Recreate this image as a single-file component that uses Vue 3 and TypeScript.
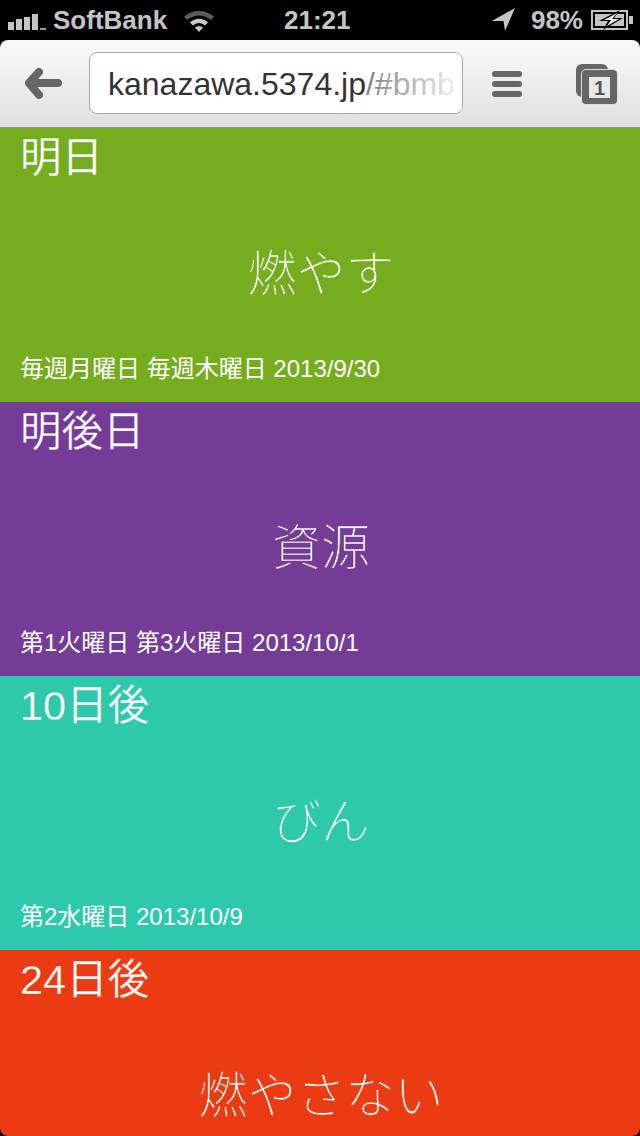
<script setup lang="ts">
type Card = { when: string; name: string; rule?: string; color: string };

const cards: Card[] = [
  { when: "明日", name: "燃やす", rule: "毎週月曜日 毎週木曜日 2013/9/30", color: "#76ad1f" },
  { when: "明後日", name: "資源", rule: "第1火曜日 第3火曜日 2013/10/1", color: "#743c96" },
  { when: "10日後", name: "びん", rule: "第2水曜日 2013/10/9", color: "#2dc9aa" },
  { when: "24日後", name: "燃やさない", color: "#eb3b12" },
];
</script>

<template>
  <div class="phone">
    <div class="status">
      <div class="status-left">
        <span class="bars"><i v-for="h in [8, 11, 13, 16]" :key="h" :style="{ height: h + 'px' }"></i><i class="dot"></i></span>
        <span>SoftBank</span>
        <svg class="wifi" width="32" height="24" viewBox="0 0 32 24">
          <path d="M1 8.500C9.500 1 22.500 1 31 8.500L28 12C21 6 11 6 4 12Z" fill="#5c5c5c" />
          <path d="M7 14.500C12.500 9.500 19.500 9.500 25 14.500L22 17.500C18.500 14 13.500 14 10 17.500Z" fill="#c8c8c8" />
          <path d="M12 19.500C14.500 17.500 17.500 17.500 20 19.500L16 24Z" fill="#c8c8c8" />
        </svg>
      </div>
      <span class="clock">21:21</span>
      <div class="status-right">
        <svg class="locate" width="24" height="24" viewBox="0 0 24 24"><path d="M0 13L23 0L13 23L11.500 13Z" fill="#c4c4c4" /></svg>
        <span>98%</span>
        <svg class="battery" width="43" height="20" viewBox="0 0 43 20">
          <rect x="1" y="1" width="35" height="18" fill="none" stroke="#c4c4c4" stroke-width="2" />
          <rect x="4" y="4" width="29" height="12" fill="#c4c4c4" />
          <rect x="38" y="6" width="4" height="8" fill="#c4c4c4" />
          <path d="M29 0L8 11H17L12 20L32 8H23Z" fill="#000" />
          <path d="M26 3L13 10H20L16 16L28 9H21Z" fill="#eee" />
        </svg>
      </div>
    </div>

    <div class="browser">
      <div class="toolbar">
        <svg class="back" width="38" height="34" viewBox="0 0 38 34">
          <path d="M15 5L5 16L15 28M5 16H34" fill="none" stroke="#666" stroke-width="8" stroke-linecap="round" stroke-linejoin="round" />
        </svg>
        <div class="url"><span class="host">kanazawa.5374.jp</span><span class="hash">/#bmb</span><span class="fade"></span></div>
        <div class="menu"><i></i><i></i><i></i></div>
        <svg class="tabs" width="43" height="42" viewBox="0 0 43 42">
          <rect x="1" y="1" width="32" height="33" rx="6" fill="#666" />
          <rect x="6" y="6" width="37" height="36" rx="5" fill="#ddd" />
          <rect x="7" y="7" width="35" height="34" rx="4" fill="#666" />
          <rect x="14" y="14" width="21" height="21" fill="#e9e9e9" />
          <text x="24.500" y="32" text-anchor="middle" class="tab-count">1</text>
        </svg>
      </div>

      <section v-for="c in cards" :key="c.when" class="card" :style="{ background: c.color, '--c': c.color }">
        <h2>{{ c.when }}</h2>
        <p class="name">{{ c.name }}</p>
        <p v-if="c.rule" class="rule">{{ c.rule }}</p>
      </section>
    </div>
  </div>
</template>

<style scoped>
.phone {
  width: 640px;
  height: 1136px;
  overflow: hidden;
  background: #000;
  font-family: "Liberation Sans", "Noto Sans CJK JP", sans-serif;
}
.status {
  height: 40px;
  position: relative;
  display: flex;
  align-items: center;
  justify-content: space-between;
  padding: 0 6px 0 8px;
  color: #c4c4c4;
  font-size: 26px;
  font-weight: 700;
}
.status-left {
  display: flex;
  align-items: center;
  gap: 7px;
}
.bars {
  display: flex;
  align-items: flex-end;
  gap: 2px;
  height: 16px;
  margin-top: 4px;
}
.bars i {
  width: 6px;
  background: #c4c4c4;
}
.bars i.dot {
  height: 2px;
  background: #999;
}
.wifi {
  margin-left: 9px;
}
.clock {
  position: absolute;
  left: 284px;
  top: 4px;
  line-height: 32px;
}
.status-right {
  display: flex;
  align-items: center;
}
.locate {
  margin-right: 15px;
}
.battery {
  margin-left: 8px;
}
.browser {
  height: 1096px;
  overflow: hidden;
  border-radius: 8px;
}
.toolbar {
  height: 88px;
  box-sizing: border-box;
  display: flex;
  align-items: center;
  padding: 0 0 0 24px;
  background: linear-gradient(#fbfbfb, #dfdfdf);
  border-bottom: 1px solid #8f8f8f;
}
.back {
  flex: none;
}
.url {
  position: relative;
  box-sizing: border-box;
  width: 374px;
  height: 62px;
  margin: 0 0 2px 27px;
  padding-left: 18px;
  border: 1px solid #aaa;
  border-radius: 8px;
  background: #fff;
  font-size: 32px;
  line-height: 62px;
  white-space: nowrap;
  overflow: hidden;
}
.host {
  color: #333;
}
.hash {
  color: #888;
}
.fade {
  position: absolute;
  top: 0;
  right: 0;
  bottom: 0;
  width: 90px;
  background: linear-gradient(to right, rgba(255, 255, 255, 0), rgba(255, 255, 255, 0.94));
}
.menu {
  width: 30px;
  margin-left: 29px;
  display: flex;
  flex-direction: column;
  gap: 4px;
}
.menu i {
  height: 6px;
  border-radius: 3px;
  background: #666;
}
.tabs {
  margin-left: 53px;
  flex: none;
}
.tab-count {
  font-size: 20px;
  font-weight: 700;
  fill: #555;
}
.card {
  height: 274px;
  box-sizing: border-box;
  display: flex;
  flex-direction: column;
  padding: 0 20px;
  color: #fff;
}
.card h2 {
  margin: 0;
  height: 60px;
  font-size: 41.5px;
  font-weight: 400;
  line-height: 60px;
  -webkit-text-stroke: 0.3px var(--c);
}
.name {
  margin: 0;
  height: 163px;
  padding: 54px 0 0 2px;
  box-sizing: border-box;
  text-align: center;
  font-size: 49px;
  font-weight: 200;
  line-height: 64px;
  -webkit-text-stroke: 0.7px var(--c);
}
.rule {
  margin: 0;
  font-size: 24px;
  line-height: 36px;
}
</style>

<style>
body {
  margin: 0;
  background: #000;
}
</style>
